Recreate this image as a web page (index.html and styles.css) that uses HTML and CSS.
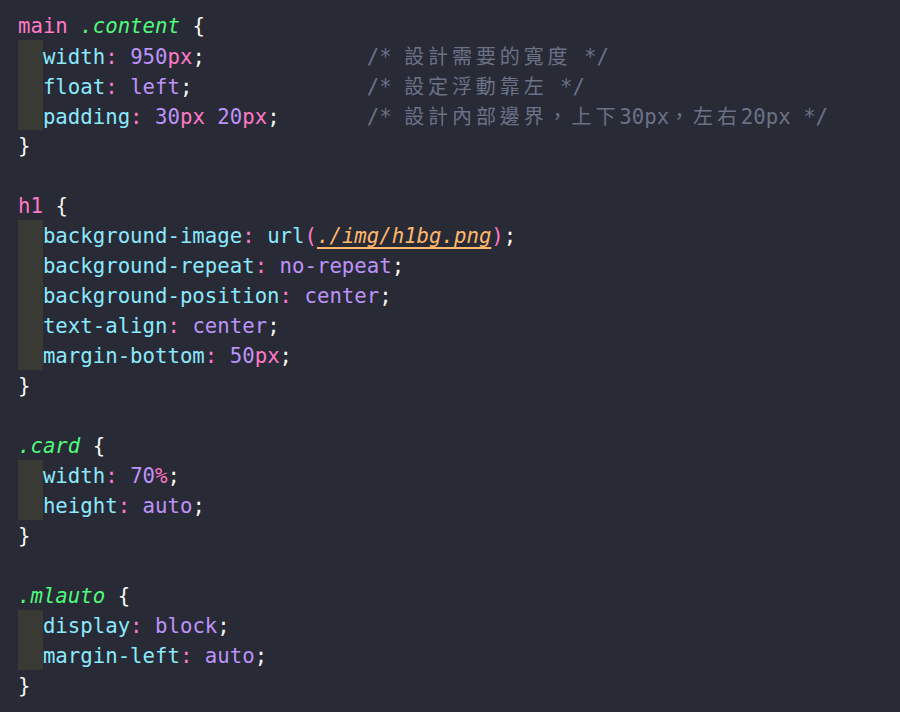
FILE: index.html
```html
<!DOCTYPE html>
<html lang="zh-Hant">
<head>
<meta charset="utf-8">
<link rel="stylesheet" href="styles.css">
</head>
<body>
<div class="code">
<div class="ln"><span class="tag">main</span> <span class="cls">.content</span> <span class="p">{</span></div>
<div class="ln"><span class="ind"></span><span class="prop">width</span><span class="k">:</span> <span class="num">950</span><span class="k">px</span><span class="p">;</span>             <span class="cm">/* <span class="cjk">設計需要的寬度</span> */</span></div>
<div class="ln"><span class="ind"></span><span class="prop">float</span><span class="k">:</span> <span class="val">left</span><span class="p">;</span>              <span class="cm">/* <span class="cjk">設定浮動靠左</span> */</span></div>
<div class="ln"><span class="ind"></span><span class="prop">padding</span><span class="k">:</span> <span class="num">30</span><span class="k">px</span> <span class="num">20</span><span class="k">px</span><span class="p">;</span>       <span class="cm">/* <span class="cjk">設計內部邊界，上下</span>30px<span class="cjk">，左右</span>20px */</span></div>
<div class="ln"><span class="p">}</span></div>
<div class="ln"> </div>
<div class="ln"><span class="tag">h1</span> <span class="p">{</span></div>
<div class="ln"><span class="ind"></span><span class="prop">background-image</span><span class="k">:</span> <span class="prop">url</span><span class="k">(</span><span class="str">./img/h1bg.png</span><span class="k">)</span><span class="p">;</span></div>
<div class="ln"><span class="ind"></span><span class="prop">background-repeat</span><span class="k">:</span> <span class="val">no-repeat</span><span class="p">;</span></div>
<div class="ln"><span class="ind"></span><span class="prop">background-position</span><span class="k">:</span> <span class="val">center</span><span class="p">;</span></div>
<div class="ln"><span class="ind"></span><span class="prop">text-align</span><span class="k">:</span> <span class="val">center</span><span class="p">;</span></div>
<div class="ln"><span class="ind"></span><span class="prop">margin-bottom</span><span class="k">:</span> <span class="num">50</span><span class="k">px</span><span class="p">;</span></div>
<div class="ln"><span class="p">}</span></div>
<div class="ln"> </div>
<div class="ln"><span class="cls">.card</span> <span class="p">{</span></div>
<div class="ln"><span class="ind"></span><span class="prop">width</span><span class="k">:</span> <span class="num">70</span><span class="k">%</span><span class="p">;</span></div>
<div class="ln"><span class="ind"></span><span class="prop">height</span><span class="k">:</span> <span class="val">auto</span><span class="p">;</span></div>
<div class="ln"><span class="p">}</span></div>
<div class="ln"> </div>
<div class="ln"><span class="cls">.mlauto</span> <span class="p">{</span></div>
<div class="ln"><span class="ind"></span><span class="prop">display</span><span class="k">:</span> <span class="val">block</span><span class="p">;</span></div>
<div class="ln"><span class="ind"></span><span class="prop">margin-left</span><span class="k">:</span> <span class="val">auto</span><span class="p">;</span></div>
<div class="ln"><span class="p">}</span></div>
</div>
</body>
</html>
```
FILE: styles.css
```css
html, body {
  margin: 0;
  background: #282a36;
}
body {
  padding: 11px 0 0 18px;
  height: 712px;
  box-sizing: border-box;
  overflow: hidden;
}
.code {
  font-family: "DejaVu Sans Mono", "Liberation Mono", monospace;
  font-size: 20.7px;
  color: #f8f8f2;
}
.ln {
  height: 30px;
  line-height: 30px;
  white-space: pre;
}
.ind {
  display: inline-block;
  width: 2ch;
  height: 30px;
  vertical-align: top;
  margin-top: -1px;
  margin-bottom: -1px;
  background: #393a33;
}
.tag { color: #ff79c6; }
.cls { color: #50fa7b; font-style: italic; }
.prop { color: #8be9fd; }
.k { color: #ff79c6; }
.num { color: #bd93f9; }
.val { color: #bd93f9; }
.p { color: #f8f8f2; }
.str {
  color: #ffb86c;
  font-style: italic;
  text-decoration: underline;
  text-underline-offset: 4px;
}
.cm { color: #6b7287; }
.cjk {
  font-family: "Noto Sans CJK TC", sans-serif;
  font-size: 20px;
  letter-spacing: 3.9px;
}
```
